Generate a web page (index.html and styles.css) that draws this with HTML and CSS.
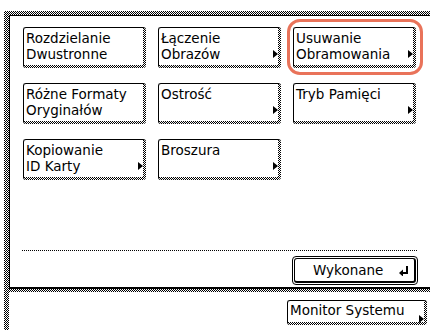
FILE: index.html
```html
<!DOCTYPE html>
<html>
  <head>
    <meta charset="utf-8">
    <title>Kopiowanie - Funkcje specjalne</title>
    <link rel="stylesheet" href="styles.css">
  </head>
  <body>
  <div class="screen">
    <div class="frame">
      <div class="panel">
        <div class="keys">
          <div class="key"><div class="face"><span class="label">Rozdzielanie<br>Dwustronne</span></div></div>
          <div class="key"><div class="face"><span class="label">Łączenie<br>Obrazów</span><i class="arrow"></i></div></div>
          <div class="key picked"><div class="face"><span class="label">Usuwanie<br>Obramowania</span><i class="arrow"></i></div></div>
          <div class="key"><div class="face"><span class="label">Różne Formaty<br>Oryginałów</span></div></div>
          <div class="key"><div class="face"><span class="label">Ostrość</span><i class="arrow"></i></div></div>
          <div class="key"><div class="face"><span class="label">Tryb Pamięci</span><i class="arrow"></i></div></div>
          <div class="key"><div class="face"><span class="label">Kopiowanie<br>ID Karty</span><i class="arrow"></i></div></div>
          <div class="key"><div class="face"><span class="label">Broszura</span><i class="arrow"></i></div></div>
        </div>
        <div class="rule"></div>
        <div class="actions">
          <div class="done">
            <div class="done-in">
              <span>Wykonane</span>
              <svg class="enter" width="10" height="10" viewBox="0 0 10 10">
                <path d="M8 0 V7 H3" fill="none" stroke="#000" stroke-width="2"/>
                <polygon points="0,7 4,3.5 4,10.5" fill="#000"/>
              </svg>
            </div>
          </div>
        </div>
      </div>
      <div class="band"></div>
      <div class="footer">
        <div class="key small"><div class="face"><span class="label">Monitor Systemu</span><i class="arrow"></i></div></div>
      </div>
    </div>
  </div>
  </body>
</html>
```

FILE: styles.css
```css
body {
    margin: 0;
    background: #fff;
    font-family: "DejaVu Sans", "Liberation Sans", sans-serif;
    font-size: 13.5px;
    color: #000;
}
.screen {
    width: 430px;
    height: 330px;
    padding: 11px 0 0 4px;
    box-sizing: border-box;
    overflow: hidden;
}
/* checker bands, like the lcd dither */
.frame {
    height: 100%;
    padding: 4px 0 0 5px;
    box-sizing: border-box;
    display: flex;
    flex-direction: column;
    background: repeating-conic-gradient(#000 0 25%, #fff 0 50%) 0 0 / 2px 2px;
}
.panel {
    background: #fff;
    border-top: 1px solid #000;
    border-left: 1px solid #000;
    border-bottom: 2px solid #000;
    padding: 11px 0 2px 13px;
    display: flex;
    flex-direction: column;
}
.band {
    height: 3px;
}
.footer {
    flex: 1;
    background: #fff;
    display: flex;
    justify-content: flex-end;
    padding: 8px 3px 0 0;
}
.keys {
    display: grid;
    grid-template-columns: repeat(3, 123px);
    grid-auto-rows: 41px;
    column-gap: 12px;
    row-gap: 15px;
}
.key {
    position: relative;
    display: flex;
    box-sizing: border-box;
    border-top: 1px solid #000;
    border-left: 1px solid #000;
    border-radius: 3px;
    padding: 0 3px 3px 0;
    background: repeating-conic-gradient(#000 0 25%, #fff 0 50%) 0 0 / 2px 2px;
}
.face {
    flex: 1;
    display: flex;
    background: #fff;
    border-radius: 2px 0 0 0;
    padding: 2px 0 0 2px;
}
.label {
    line-height: 16px;
    white-space: nowrap;
}
.arrow {
    margin-left: auto;
    align-self: flex-end;
    margin-bottom: 7px;
    width: 0;
    height: 0;
    border-left: 5px solid #000;
    border-top: 4px solid transparent;
    border-bottom: 4px solid transparent;
}
.picked::after {
    content: "";
    position: absolute;
    left: -7px;
    top: -9px;
    right: -7px;
    bottom: -7px;
    border: 3px solid #e9735a;
    border-radius: 13px;
}
.rule {
    height: 1px;
    margin: 70px 12px 0 -1px;
    background: repeating-linear-gradient(90deg, #000 0 1px, #fff 1px 2px);
}
.actions {
    display: flex;
    justify-content: flex-end;
    padding: 5px 12px 0 0;
}
.done {
    width: 126px;
    height: 29px;
    box-sizing: border-box;
    border: 1px solid #000;
    border-radius: 4px;
    padding: 1px;
    display: flex;
}
.done-in {
    flex: 1;
    display: flex;
    align-items: center;
    justify-content: space-between;
    border: 1px solid #000;
    border-right-width: 2px;
    border-bottom-width: 2px;
    border-radius: 3px;
    padding: 0 5px 0 18px;
}
.enter {
    margin-top: 2px;
}
.small {
    width: 140px;
    height: 25px;
}
.small .face {
    padding-top: 1px;
}
.small .arrow {
    margin-bottom: -1px;
}
```
